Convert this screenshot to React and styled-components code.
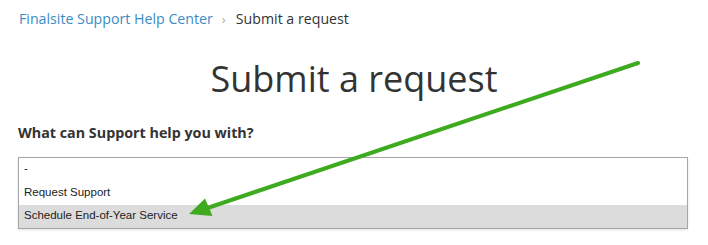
import React from "react";
import styled, { createGlobalStyle } from "styled-components";

const Global = createGlobalStyle`
  html, body { margin: 0; padding: 0; background: #fff; }
  body { font-family: "Open Sans", "Liberation Sans", sans-serif; }
`;

const Page = styled.div`
  position: relative;
  width: 708px;
  height: 245px;
  padding: 9px 18px 0 18px;
  box-sizing: border-box;
  overflow: hidden;
`;

const Breadcrumbs = styled.nav`
  display: flex;
  align-items: center;
  font-size: 14.2px;
  line-height: 20px;
  margin-left: 1px;
`;

const Crumb = styled.span`
  color: ${(p) => (p.$link ? "#3b8cc4" : "#333")};
`;

const Sep = styled.span`
  color: #aaa;
  font-size: 13px;
  margin: 0 10px 0 9px;
`;

const Title = styled.h1`
  margin: 28px 0 0 0;
  font-size: 36px;
  line-height: 43px;
  font-weight: 400;
  color: #333;
  text-align: center;
`;

const Label = styled.label`
  display: block;
  margin-top: 23px;
  font-size: 14.3px;
  line-height: 20px;
  font-weight: 700;
  color: #333;
`;

const ListBox = styled.div`
  margin-top: 14px;
  width: 670px;
  box-sizing: border-box;
  border: 1px solid #a6a6a6;
  background: #fff;
  box-shadow: 0 1px 2px rgba(0, 0, 0, 0.12);
  display: flex;
  flex-direction: column;
`;

const Option = styled.div`
  height: ${(p) => p.$h}px;
  line-height: ${(p) => p.$h - 2}px;
  padding: 0 0 0 5px;
  font-family: "Liberation Sans", Arial, sans-serif;
  font-size: 11.5px;
  color: #222;
  background: ${(p) => (p.$selected ? "#dcdcdc" : "transparent")};
  white-space: nowrap;
`;

const Overlay = styled.svg`
  position: absolute;
  left: 0;
  top: 0;
  pointer-events: none;
`;

export default function App() {
  return (
    <>
      <Global />
      <Page>
        <Breadcrumbs>
          <Crumb $link>Finalsite Support Help Center</Crumb>
          <Sep>›</Sep>
          <Crumb>Submit a request</Crumb>
        </Breadcrumbs>
        <Title>Submit a request</Title>
        <Label>What can Support help you with?</Label>
        <ListBox>
          <Option $h={23}>-</Option>
          <Option $h={24}>Request Support</Option>
          <Option $h={23} $selected>Schedule End-of-Year Service</Option>
        </ListBox>
        <Overlay width="708" height="245" viewBox="0 0 708 245">
          <line
            x1="638"
            y1="63"
            x2="206"
            y2="208.5"
            stroke="#3eaa1f"
            strokeWidth="4"
            strokeLinecap="round"
          />
          <polygon points="189,214 205,198.5 212.5,216" fill="#3eaa1f" />
        </Overlay>
      </Page>
    </>
  );
}
